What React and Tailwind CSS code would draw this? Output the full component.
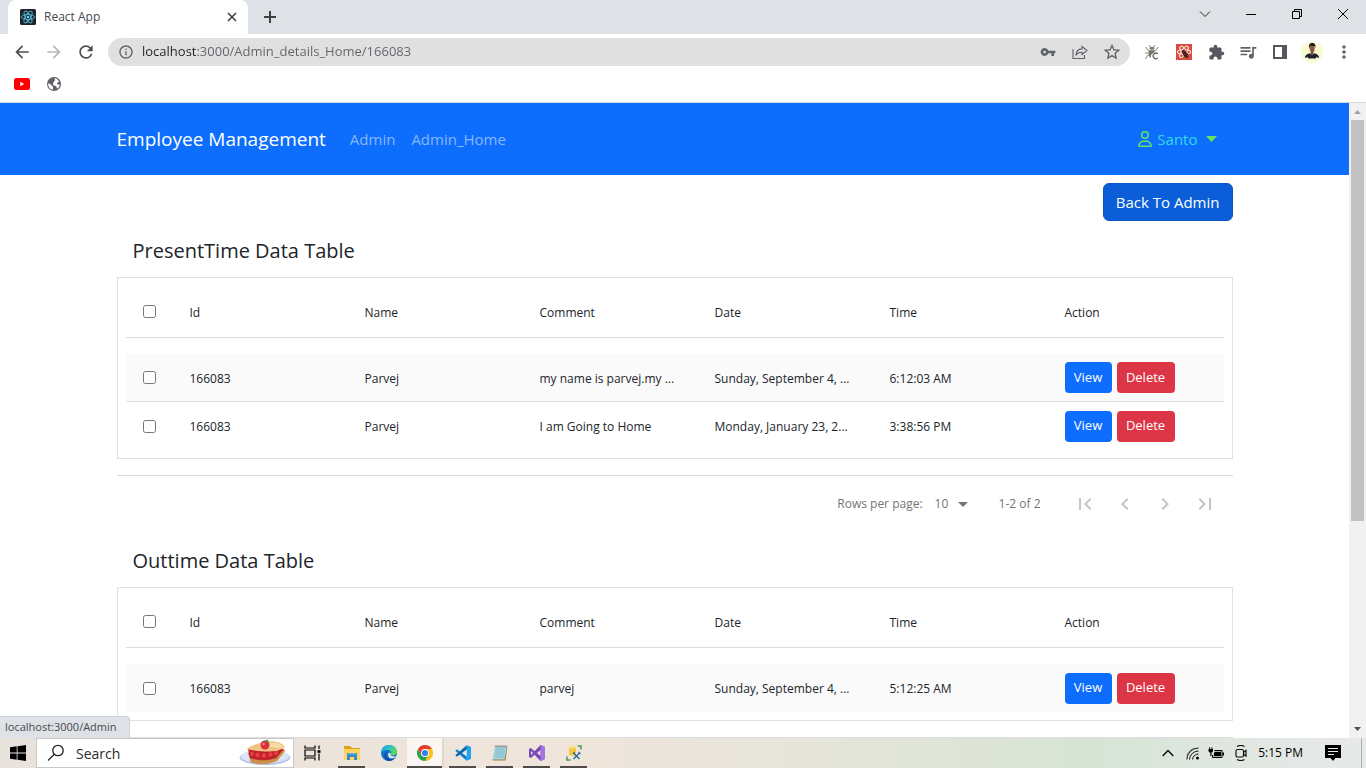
import React from "react";
import {
  MdArrowBack,
  MdArrowForward,
  MdRefresh,
  MdInfoOutline,
  MdVpnKey,
  MdStarBorder,
  MdExtension,
  MdQueueMusic,
  MdMoreVert,
  MdFirstPage,
  MdLastPage,
  MdChevronLeft,
  MdChevronRight,
  MdArrowDropDown,
} from "react-icons/md";
import { FaRegUser } from "react-icons/fa6";

const presentRows = [
  { id: "166083", name: "Parvej", comment: "my name is parvej.my ...", date: "Sunday, September 4, ...", time: "6:12:03 AM" },
  { id: "166083", name: "Parvej", comment: "I am Going to Home", date: "Monday, January 23, 2...", time: "3:38:56 PM" },
];

const outRows = [
  { id: "166083", name: "Parvej", comment: "parvej", date: "Sunday, September 4, ...", time: "5:12:25 AM" },
];

const columns = ["Id", "Name", "Comment", "Date", "Time", "Action"];

function ReactLogo() {
  return (
    <svg viewBox="0 0 16 16" className="size-4" aria-hidden="true">
      <rect width="16" height="16" rx="1.5" fill="#20232a" />
      <g fill="none" stroke="#4fb8d3" strokeWidth="0.9">
        <ellipse cx="8" cy="8" rx="6.6" ry="2.6" />
        <ellipse cx="8" cy="8" rx="6.6" ry="2.6" transform="rotate(60 8 8)" />
        <ellipse cx="8" cy="8" rx="6.6" ry="2.6" transform="rotate(120 8 8)" />
      </g>
      <circle cx="8" cy="8" r="1.3" fill="#61dafb" />
    </svg>
  );
}

function TabStrip() {
  return (
    <div className="flex h-[34px] items-stretch bg-[#dee1e6] pl-2">
      <div className="flex w-60 items-center rounded-t-lg bg-white pl-3 pr-2">
        <ReactLogo />
        <span className="ml-2 flex-1 text-[12px] text-[#45484c]">React App</span>
        <button aria-label="Close tab" className="flex size-4 items-center justify-center">
          <svg viewBox="0 0 10 10" className="size-[10px]" stroke="#3c4043" strokeWidth="1.6">
            <path d="M1 1l8 8M9 1l-8 8" />
          </svg>
        </button>
      </div>
      <button aria-label="New tab" className="ml-3 flex w-5 items-center justify-center">
        <svg viewBox="0 0 12 12" className="size-3" stroke="#3c4043" strokeWidth="2">
          <path d="M6 0v12M0 6h12" />
        </svg>
      </button>
      <div className="ml-auto flex items-center pb-[6px]">
        <button aria-label="Search tabs" className="flex w-[46px] items-center justify-center">
          <svg viewBox="0 0 12 12" className="size-3" fill="none" stroke="#222" strokeWidth="1">
            <path d="M1 3.5l5 5 5-5" />
          </svg>
        </button>
        <button aria-label="Minimize" className="flex w-[46px] items-center justify-center">
          <svg viewBox="0 0 10 10" className="size-[10px]" stroke="#000" strokeWidth="1">
            <path d="M0 5.5h10" />
          </svg>
        </button>
        <button aria-label="Restore" className="flex w-[46px] items-center justify-center">
          <svg viewBox="0 0 10 10" className="size-[10px]" fill="none" stroke="#000" strokeWidth="1">
            <path d="M0.5 2.5h7v7h-7zM2.5 2.5v-2h7v7h-2" />
          </svg>
        </button>
        <button aria-label="Close window" className="flex w-[46px] items-center justify-center">
          <svg viewBox="0 0 10 10" className="size-[10px]" stroke="#000" strokeWidth="1">
            <path d="M0 0l10 10M10 0L0 10" />
          </svg>
        </button>
      </div>
    </div>
  );
}

function BugIcon() {
  return (
    <svg viewBox="0 0 16 16" className="size-4" aria-hidden="true">
      <g fill="none" stroke="#7d7870" strokeWidth="0.9">
        <path d="M5 1l1.500 2.500M11 1L9.500 3.500M1.500 3l2.500 3 2 1M14.500 3L12 6l-2 1M1 9h4M1.500 15l1.500-3 2.500-1.500" />
      </g>
      <ellipse cx="8" cy="4.200" rx="2.500" ry="1.500" fill="#77726a" />
      <path d="M5 6.200h6l-1 2.300-2.800 2L6.500 14C5 13 4.200 10.500 5 6.200z" fill="#77726a" />
      <path d="M13.700 9.900a2.700 2.700 0 1 0 0 4" fill="none" stroke="#6b665f" strokeWidth="1.300" />
    </svg>
  );
}

function BeeIcon() {
  return (
    <svg viewBox="0 0 16 16" className="size-4" aria-hidden="true">
      <rect width="16" height="16" fill="#dd4b3e" />
      <g fill="none" stroke="#fff" strokeWidth="1">
        <circle cx="5.600" cy="4" r="1.900" />
        <circle cx="10.600" cy="4" r="1.900" />
        <circle cx="3.300" cy="8" r="1.800" />
        <circle cx="12.800" cy="8" r="1.800" />
        <circle cx="5.300" cy="11.800" r="1.900" />
      </g>
      <circle cx="7.400" cy="7.500" r="1.300" fill="#222" />
      <ellipse cx="9.800" cy="10.800" rx="2.200" ry="3.300" fill="#201a1a" transform="rotate(-30 9.800 10.800)" />
      <path d="M8 10.800l3.300-2M9.200 13l3.200-2" stroke="#dd4b3e" strokeWidth=".7" />
    </svg>
  );
}

function Avatar() {
  return (
    <svg viewBox="0 0 22 22" className="size-[22px]" aria-hidden="true">
      <circle cx="11" cy="11" r="11" fill="#f8fbd2" />
      <path d="M4 17c0-3 2.500-4.200 5-4.800l2 2 2-2c2.800.6 5 1.800 5 4.800l-3-1v1.500H7V16z" fill="#1d2130" />
      <ellipse cx="11.200" cy="7.500" rx="2.500" ry="3.700" fill="#8a5a3c" />
      <path d="M8 7.500C7.500 3.500 9 2 11.300 2s3.700 1.500 3 5l-.8-2-4.300-.2z" fill="#15151b" />
      <path d="M9.600 10.500h3l-.6 3-1 1-1-1z" fill="#7a4a32" />
    </svg>
  );
}

function ToolbarItem({ label, children }) {
  return (
    <button aria-label={label} className="flex w-8 items-center justify-center">
      {children}
    </button>
  );
}

function AddressRow() {
  return (
    <div className="flex h-9 items-center bg-white pl-3 pr-[6px] text-[#5f6368]">
      <button aria-label="Back" className="mr-3 flex size-5 items-center justify-center text-[#4b4e52]">
        <MdArrowBack className="size-5" />
      </button>
      <button aria-label="Forward" className="mr-3 flex size-5 items-center justify-center text-[#b4b6b8]">
        <MdArrowForward className="size-5" />
      </button>
      <button aria-label="Reload" className="mr-3 flex size-5 items-center justify-center text-[#4b4e52]">
        <MdRefresh className="size-5" />
      </button>
      <div className="flex h-7 flex-1 items-center rounded-full bg-[#e0e0e0] pl-[10px] pr-2">
        <MdInfoOutline className="size-4" />
        <input
          aria-label="Address"
          defaultValue="localhost:3000/Admin_details_Home/166083"
          className="ml-2 w-0 flex-1 bg-[linear-gradient(90deg,#202124_54px,#5f6368_54px)] bg-clip-text text-[13px] text-transparent outline-none"
        />
        <button aria-label="Passwords" className="mr-4">
          <MdVpnKey className="size-4" />
        </button>
        <button aria-label="Share" className="mr-[14px]">
          <svg viewBox="0 0 16 16" className="size-4" fill="none" stroke="#5f6368" strokeWidth="1.100">
            <path d="M1 5v9.500h11.500V11" />
            <path d="M10 2.500l5 4-5 4V8.300C7 8.300 5 9.300 3.800 11.500 4 8 6 5.200 10 4.900z" />
          </svg>
        </button>
        <button aria-label="Bookmark">
          <MdStarBorder className="size-5" />
        </button>
      </div>
      <div className="ml-[6px] flex items-center">
        <ToolbarItem label="Inspector"><BugIcon /></ToolbarItem>
        <ToolbarItem label="Bee"><BeeIcon /></ToolbarItem>
        <ToolbarItem label="Extensions"><MdExtension className="size-[17px] text-[#55585c]" /></ToolbarItem>
        <ToolbarItem label="Media"><MdQueueMusic className="size-5" /></ToolbarItem>
        <ToolbarItem label="Side panel">
          <svg viewBox="0 0 14 14" className="size-[14px]" aria-hidden="true">
            <path d="M0 0h14v14H0zM2 2v10h7V2z" fill="#55585c" fillRule="evenodd" />
          </svg>
        </ToolbarItem>
        <ToolbarItem label="Profile"><Avatar /></ToolbarItem>
        <ToolbarItem label="Menu"><MdMoreVert className="size-5" /></ToolbarItem>
      </div>
    </div>
  );
}

function BookmarkRow() {
  return (
    <div className="flex h-[33px] items-center gap-4 border-b border-[#d6d8da] bg-white pb-1 pl-[14px]">
      <a href="#youtube" aria-label="YouTube">
        <svg viewBox="0 0 16 12" className="h-3 w-4">
          <rect width="16" height="12" rx="2.500" fill="#f00" />
          <path d="M6.300 3.700v4.600L10.300 6z" fill="#fff" />
        </svg>
      </a>
      <a href="#site" aria-label="Site">
        <svg viewBox="0 0 16 16" className="size-4">
          <circle cx="8" cy="8" r="7" fill="#5f6368" />
          <path d="M8.500 2.200c2 .2 3.800 1.500 4.700 3.500-.7.600-1.500.2-2 1.200s.6 1.600 1.800 1.500l.8.300c-.3 1.600-1.200 3-2.500 3.900-.6-.9-.6-2.100-1.600-2.600-1.300-.6-2.400-.2-2.700-1.500-.3-1.200.8-1.500.7-2.300-.1-1 .7-1.300 1.300-1.800z" fill="#fff" />
          <path d="M2.200 7.500c1.300 0 2.500.6 3 1.600.6 1.100 1.900 1.300 1.900 2.500 0 .8-.5 1.500-.4 2.200C4 13.200 2 10.800 2.200 7.500z" fill="#fff" />
        </svg>
      </a>
    </div>
  );
}

function Navbar() {
  return (
    <nav className="bg-[#0d6efd]">
      <div className="mx-auto flex h-[72px] max-w-[1140px] items-center px-3">
        <a href="#home" className="mr-6 text-[19px] text-white">Employee Management</a>
        <a href="#admin" className="mr-4 text-[15px] text-[#86b7fe]">Admin</a>
        <a href="#admin-home" className="text-[15px] text-[#86b7fe]">Admin_Home</a>
        <button className="ml-auto mr-4 flex items-center text-[15px] text-[#32d9e8]">
          <FaRegUser className="mr-1 size-4 text-[#62e070]" />
          Santo
          <svg viewBox="0 0 11 6" className="ml-2 h-[6px] w-[11px]" aria-hidden="true">
            <path d="M0 0h11L5.500 6z" fill="#66e060" />
          </svg>
        </button>
      </div>
    </nav>
  );
}

function DataTable({ title, rows }) {
  return (
    <section>
      <h2 className="flex h-14 items-center pl-4 pt-1 text-[20px] text-[#212529]">{title}</h2>
      <div className="border border-[#dee2e6] p-2">
        <table className="w-full table-fixed border-separate border-spacing-0 text-left text-[#212529]">
          <thead>
            <tr className="h-[52px] text-[12px]">
              <th className="w-12 border-b border-[#dcdcdc] text-center">
                <input type="checkbox" aria-label="Select all rows" className="mx-auto block size-[13px]" />
              </th>
              {columns.map((c) => (
                <th key={c} className="border-b border-[#dcdcdc] px-4 pt-[2px] font-medium">{c}</th>
              ))}
            </tr>
          </thead>
          <tbody className="text-[12px] before:block before:h-4 before:content-['']">
            {rows.map((r, i) => (
              <tr
                key={i}
                className="h-12 odd:bg-[#fafafa] [&>td]:border-[#dcdcdc] [&:not(:last-child)>td]:border-b"
              >
                <td>
                  <input type="checkbox" aria-label={"Select row " + (i + 1)} className="mx-auto block size-[13px]" />
                </td>
                {[r.id, r.name, r.comment, r.date, r.time].map((v, j) => (
                  <td key={j} className="whitespace-nowrap px-4 pt-[2px]">{v}</td>
                ))}
                <td className="pl-4">
                  <div className="flex gap-[5px] text-white">
                    <button className="h-[31px] w-[47px] rounded bg-[#0d6efd] text-[13px]">View</button>
                    <button className="h-[31px] w-[58px] rounded bg-[#dc3545] text-[13px]">Delete</button>
                  </div>
                </td>
              </tr>
            ))}
          </tbody>
        </table>
      </div>
      <hr className="mt-4 border-[#dcdcdc]" />
    </section>
  );
}

function Pagination() {
  return (
    <div className="flex h-[55px] items-center justify-end pr-2 text-[12px] text-[#757575]">
      <label htmlFor="rows" className="mr-3">Rows per page:</label>
      <div className="relative mr-7 flex items-center">
        <select id="rows" defaultValue="10" className="w-9 appearance-none bg-transparent outline-none">
          <option>10</option>
        </select>
        <MdArrowDropDown className="pointer-events-none absolute -right-1 size-6" />
      </div>
      <span className="mr-6">1-2 of 2</span>
      <div className="flex text-[#c4c4c4]">
        <button disabled aria-label="First page" className="flex size-10 items-center justify-center"><MdFirstPage className="size-6" /></button>
        <button disabled aria-label="Previous page" className="flex size-10 items-center justify-center"><MdChevronLeft className="size-6" /></button>
        <button disabled aria-label="Next page" className="flex size-10 items-center justify-center"><MdChevronRight className="size-6" /></button>
        <button disabled aria-label="Last page" className="flex size-10 items-center justify-center"><MdLastPage className="size-6" /></button>
      </div>
    </div>
  );
}

function Scrollbar() {
  return (
    <div className="flex w-[17px] shrink-0 flex-col items-center bg-[#f1f1f1]" aria-hidden="true">
      <svg viewBox="0 0 17 17" className="size-[17px]"><path d="M5 11h7L8.500 7z" fill="#a3a3a3" /></svg>
      <div className="flex w-[13px] flex-1 flex-col">
        <div className="h-2/3 bg-[#c1c1c1]" />
      </div>
      <svg viewBox="0 0 17 17" className="size-[17px]"><path d="M5 6h7l-3.500 4z" fill="#505050" /></svg>
    </div>
  );
}

function PieIcon() {
  return (
    <svg viewBox="0 0 52 28" className="h-7 w-[52px]" aria-hidden="true">
      <ellipse cx="26" cy="18.500" rx="25.500" ry="7.500" fill="#b4c2e8" />
      <ellipse cx="26" cy="17.500" rx="24.500" ry="6.800" fill="#dbe3f8" />
      <path d="M9 14l3 9c9 3 17 2.500 25-1l9-11z" fill="#b8682c" />
      <path d="M9 10l2 9c9 3 18 2.500 26 0l8-9z" fill="#c3202b" />
      <path d="M11 19.500c9 3 18 2.500 26 0l8-9.500 1 2-8 10c-9 3.500-18 4-26 1z" fill="#cf9148" />
      <path d="M7 10C12 7 18 4 28 2.500c9-1 15 1 18 6L38 12c-9 1-19 .5-31-2z" fill="#f0c384" />
      <path d="M30 4c7-1 12 1 14 4.500-5 1.500-10-1-14-.5z" fill="#f8dca6" />
      <g fill="#e5404a">
        <circle cx="13" cy="15" r="2" /><circle cx="18.500" cy="16" r="2.200" /><circle cx="25" cy="16.500" r="2.200" /><circle cx="31.500" cy="15.500" r="2.200" /><circle cx="37" cy="14" r="2" />
      </g>
      <circle cx="26" cy="6" r="4.500" fill="#d9303a" />
      <circle cx="24.500" cy="5" r="1.300" fill="#f58088" />
      <path d="M25 2l3-1.500 2 2-2 1z" fill="#4b9b44" />
    </svg>
  );
}

const appIcons = {
  explorer: (
    <svg viewBox="0 0 18 16" className="h-4 w-[18px]">
      <path d="M1 1h6l2 2h8v12H1z" fill="#e0a010" />
      <path d="M1 4h16v11H1z" fill="#ffd560" />
      <path d="M4 8h10v7h-3v-3H7v3H4z" fill="#3a87d0" />
      <path d="M5 8h8v1.500H5z" fill="#62aeea" />
    </svg>
  ),
  edge: (
    <svg viewBox="0 0 16 16" className="size-4">
      <defs>
        <linearGradient id="edge-top" x1="0" y1="0" x2="1" y2="0.4">
          <stop offset="0" stopColor="#2a9fe0" />
          <stop offset="0.5" stopColor="#2cc0cf" />
          <stop offset="1" stopColor="#60d852" />
        </linearGradient>
      </defs>
      <circle cx="8" cy="8" r="8" fill="#1173cf" />
      <path d="M0 7.500C.5 3 4 0 8 0c5 0 8 3.300 8 6.500 0 2.600-2 4-4.300 4-1.700 0-2.300-.6-2-1.200.8-1.300.5-4-2.500-4.300C4 4.600 1.500 5.500 0 7.500z" fill="url(#edge-top)" />
      <path d="M6 6.800c-2.500 2.700-.5 7.500 4 7.400 2 0 3.500-.8 4.700-2C12.500 15 9.500 16 7.500 16 3.500 15.500 1.500 8 6 6.800z" fill="#11479c" />
      <path d="M9.700 9.300c-.8 1.800 2 3 5.600 1.600-1.800 2.800-5.200 3-7 1.500-1.500-1.300-1.500-3.600-.4-4.600 1-.6 2.200.5 1.800 1.500z" fill="#efe6dd" />
    </svg>
  ),
  chrome: (
    <svg viewBox="0 0 16 16" className="size-4">
      <path d="M4.600 10L1.070 4 8 4h6.930A8 8 0 0 1 8 16l3.460-6z" fill="#fbc116" />
      <path d="M4.600 10L1.070 4A8 8 0 0 0 8 16l3.460-6z" fill="#2ca24c" />
      <path d="M1.070 4A8 8 0 0 1 14.930 4H8L4.600 10z" fill="#e33b2e" />
      <circle cx="8" cy="8" r="4" fill="#fff" />
      <circle cx="8" cy="8" r="3.100" fill="#3b7ded" />
    </svg>
  ),
  code: (
    <svg viewBox="0 0 16 16" className="size-4">
      <path d="M11.700 15.800L.3 5.800 1.900 4.200 12 11.800z" fill="#0f7fca" />
      <path d="M11.700.2L.3 10.200l1.600 1.600L12 4.200z" fill="#0a6ab0" />
      <path d="M11.700.2L16 2v12l-4.300 1.800z" fill="#22a2ef" />
    </svg>
  ),
  notepad: (
    <svg viewBox="0 0 16 16" className="size-4">
      <path d="M3.500 1.500H15.500L13.500 15.500H.5z" fill="#a37a35" />
      <path d="M3 1.500h12L12.500 14.500H.5z" fill="#a6d6e2" />
      <path d="M4 4h9.500M3.600 6h9.500M3.200 8h9.500M2.800 10h9.500M2.400 12h9.500" stroke="#76b0c2" strokeWidth=".7" />
      <path d="M4 .3v2M6 .3v2M8 .3v2M10 .3v2M12 .3v2M14 .3v2" stroke="#777" strokeWidth="1" />
    </svg>
  ),
  studio: (
    <svg viewBox="0 0 16 16" className="size-4">
      <path d="M0 4l2-1 3.500 3.200L11.500 0 16 2v12l-4.500 2-6-6.200L2 13l-2-1zM2 6v4l2-2zM11.500 5L8 8l3.500 3z" fill="#7849b8" fillRule="evenodd" />
      <path d="M11.500 0L16 2v12l-4.500 2z" fill="#a474e0" />
    </svg>
  ),
  database: (
    <svg viewBox="0 0 16 16" className="size-4">
      <path d="M3 2v7.500c0 1.800 7 1.800 7 0V2z" fill="#f6c93c" />
      <ellipse cx="6.500" cy="2" rx="3.500" ry="1.500" fill="#fbe08a" />
      <path d="M11.500 1H15v3.500M1 11.500V15h3.500" fill="none" stroke="#4b9c4b" strokeWidth="1.500" />
      <path d="M7.500 8l6 6M13.500 8l-6 6" stroke="#2b6ca8" strokeWidth="1.500" />
      <path d="M7 8.500l1.500-1.500M12.500 7l2 2" stroke="#2b6ca8" strokeWidth="1.200" />
    </svg>
  ),
};

function TaskbarApp({ label, icon, active, running }) {
  return (
    <button
      aria-label={label}
      className={
        "relative flex w-[37px] items-center justify-center " + (active ? "border-r-2 border-[#e0d9d2] bg-[#faf6f2]" : "")
      }
    >
      {icon}
      {running && (
        <span className={"absolute bottom-0 h-[2px] bg-[#4e4b49] " + (active ? "inset-x-0" : "inset-x-[5px]")} />
      )}
    </button>
  );
}

function Taskbar() {
  return (
    <footer className="flex h-[30px] shrink-0 items-stretch bg-[linear-gradient(90deg,#e8e2dc_0%,#efe5db_42%,#e6e5da_60%,#d6e4d5_80%,#e4e8e5_94%,#e7e9e8_100%)] text-black">
      <button aria-label="Start" className="flex w-9 items-center justify-center">
        <svg viewBox="0 0 16 16" className="size-4">
          <path d="M0 2.300l6.700-1v6.300H0zM7.500 1.200L16 0v7.600H7.500zM0 8.400h6.700v6.300L0 13.800zM7.500 8.400H16V16l-8.500-1.200z" />
        </svg>
      </button>
      <div className="flex w-[258px] items-center border border-[#c9c9c9] bg-white pl-[10px]">
        <svg viewBox="0 0 18 18" className="size-[18px]" fill="none" stroke="#222" strokeWidth="1.300">
          <circle cx="11" cy="6.500" r="5.200" />
          <path d="M7.300 10.300L1 16.500" />
        </svg>
        <input aria-label="Search" placeholder="Search" className="ml-[11px] w-0 flex-1 text-[14px] outline-none placeholder:text-[#2b2b2b]" />
        <PieIcon />
        <span className="w-[2px]" />
      </div>
      <button aria-label="Task view" className="mr-[2px] flex w-[37px] items-center justify-center">
        <svg viewBox="0 0 17 16" className="h-4 w-[17px]" fill="none" stroke="#000" strokeWidth="1.200">
          <path d="M1 .5v2.500h10V.5M1 15.500V13h10v2.500M1 5h10v6H1zM15 .5v3.500M15 8.500V15.500" />
          <path d="M13.500 5.200h3v2.600h-3z" fill="#000" stroke="none" />
        </svg>
      </button>
      <TaskbarApp label="File Explorer" icon={appIcons.explorer} running />
      <TaskbarApp label="Edge" icon={appIcons.edge} />
      <TaskbarApp label="Chrome" icon={appIcons.chrome} running active />
      <TaskbarApp label="Visual Studio Code" icon={appIcons.code} running />
      <TaskbarApp label="Notepad" icon={appIcons.notepad} running />
      <TaskbarApp label="Visual Studio" icon={appIcons.studio} running />
      <TaskbarApp label="Database tool" icon={appIcons.database} running />
      <div className="ml-auto flex items-center">
        <svg viewBox="0 0 12 8" className="mr-3 h-2 w-3" fill="none" stroke="#000" strokeWidth="1.300"><path d="M.7 7L6 1.500 11.300 7" /></svg>
        <svg viewBox="0 0 14 14" className="mr-2 size-[14px]" fill="none" stroke="#111" strokeWidth="1">
          <path d="M.8 13.500A12 12 0 0 1 12.500 2M3.500 13.500a9 9 0 0 1 9-8.500M6.500 13.500A6 6 0 0 1 12.500 8" />
          <path d="M.8 9.500A12 12 0 0 1 9 2" stroke="#777" />
          <circle cx="11.500" cy="12" r="1.500" fill="#000" stroke="none" />
        </svg>
        <svg viewBox="0 0 16 12" className="mr-[10px] h-3 w-4" aria-hidden="true">
          <path d="M6.500 3.500h7.500v7H4.500V8" fill="none" stroke="#000" />
          <path d="M6.500 4.800H13v4.500H5.800V7zM14.500 5.500H16v3h-1.500z" />
          <path d="M.5 2h4.500v2a1.800 1.800 0 0 1-1.500 1.600V9H2.300V5.600A1.800 1.800 0 0 1 .5 4zM1.200.3h.9V2h-.9zM3.500.3h.9V2h-.9z" />
        </svg>
        <svg viewBox="0 0 14 16" className="mr-[10px] h-4 w-[14px]" fill="none" stroke="#111" strokeWidth="1.200">
          <path d="M3 1.500C5 .3 8.500.3 10.500 1.500M3 14.500c2 1.200 5.500 1.200 7.500 0" />
          <rect x="2" y="4.500" width="7.500" height="7.500" rx="1.500" />
          <path d="M9.500 7.200L12 5.500v5.500L9.500 9.300" />
        </svg>
        <time className="mr-[22px] text-[12px]">5:15 PM</time>
        <svg viewBox="0 0 16 16" className="mr-5 size-4" aria-hidden="true">
          <path d="M0 0h16v13h-5.500L8 16l-2.500-3H0z" />
          <path d="M3 3.500h10M3 6.500h10M3 9.500h6" stroke="#e6e8e7" strokeWidth="1.100" />
        </svg>
        <span className="mr-1 h-[30px] w-px bg-[#aab0ad]" />
      </div>
    </footer>
  );
}

export default function App() {
  return (
    <div className="flex h-screen flex-col overflow-hidden bg-white font-['Open_Sans','Noto_Sans',sans-serif]">
      <header>
        <TabStrip />
        <AddressRow />
        <BookmarkRow />
      </header>
      <div className="relative flex min-h-0 flex-1">
        <main className="min-w-0 flex-1 overflow-hidden">
          <Navbar />
          <div className="mx-auto max-w-[1140px] px-3 pt-2">
            <div className="flex justify-end">
              <button className="h-[38px] rounded-md border border-[#0a58ca] bg-[#0b5ed7] px-3 text-[15px] text-white">
                Back To Admin
              </button>
            </div>
            <DataTable title="PresentTime Data Table" rows={presentRows} />
            <Pagination />
            <DataTable title="Outtime Data Table" rows={outRows} />
          </div>
        </main>
        <Scrollbar />
        <div className="absolute bottom-0 left-0 flex h-[22px] items-center rounded-tr border-r border-t border-[#cfd2d6] bg-[#dee1e6] pl-[5px] pr-3 text-[11px] text-[#484b4f]">
          localhost:3000/Admin
        </div>
      </div>
      <Taskbar />
    </div>
  );
}
